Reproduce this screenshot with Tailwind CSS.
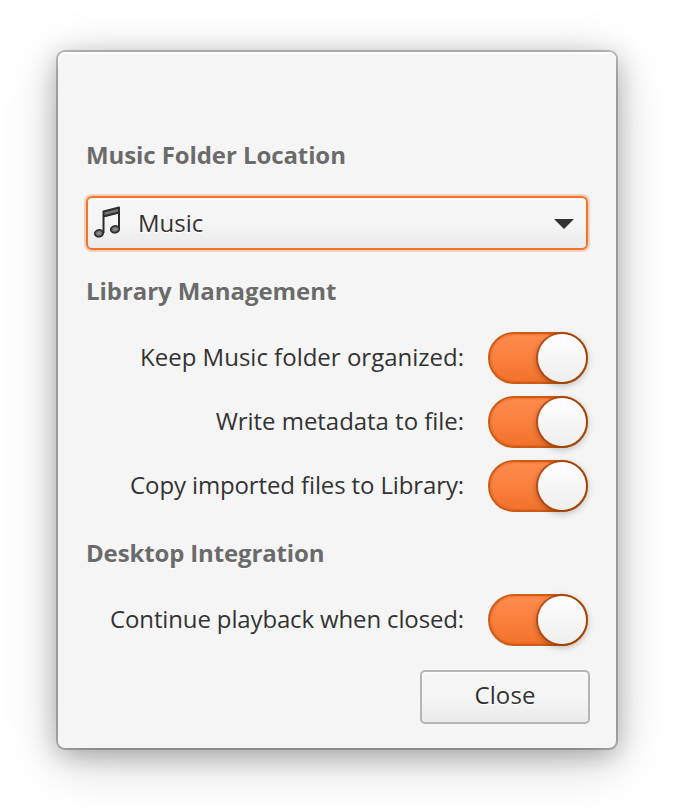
<!DOCTYPE html>
<html lang="en">
<head>
<meta charset="utf-8">
<title>Music Preferences</title>
<script src="https://cdn.jsdelivr.net/npm/@tailwindcss/browser@4"></script>
</head>
<body class="bg-white w-[674px] h-[812px] overflow-hidden pt-[52px] pl-[58px] font-['Open_Sans',sans-serif] text-[24px] leading-[34px] text-[#333]">
<main class="w-[558px] h-[696px] rounded-[7px] bg-[#f5f5f5] px-7 pt-[86px] flex flex-col shadow-[inset_0_2px_0_#fff,0_0_0_2px_rgba(0,0,0,0.23),0_6px_26px_rgba(0,0,0,0.28),0_12px_56px_rgba(0,0,0,0.2)]">
  <h2 class="h-[34px] font-bold text-[#6b6b6b] tracking-[-0.09px] [text-shadow:0_1px_0_#fff]">Music Folder Location</h2>
  <button class="mt-[24px] h-[54px] w-[502px] shrink-0 border-2 border-[#f37329] rounded-[6px] flex items-center pl-[5px] pr-[12px] text-left bg-linear-to-b from-[#f6f6f6] from-0% via-[#f5f5f5] via-50% to-[#eaeaea] shadow-[inset_0_2px_0_rgba(255,255,255,0.6),0_0_0_2px_rgba(243,115,41,0.28)]">
    <svg class="w-[30px] h-[36px] shrink-0" viewBox="0 0 30 36" fill="none">
      <defs><radialGradient id="note"><stop offset="0" stop-color="#999"/><stop offset="1" stop-color="#555"/></radialGradient></defs>
      <path d="M10.500 6.500 26 2.500V8L10.500 12Z" fill="#737373"/>
      <path d="M10.500 28V6.500L26 2.500V24M10.500 11.500 26 7.500" stroke="#2c2c2c" stroke-width="2" stroke-linejoin="round"/>
      <ellipse cx="6" cy="28.300" rx="4.300" ry="3.400" transform="rotate(-10 6 28.300)" fill="url(#note)" stroke="#2c2c2c" stroke-width="1.600"/>
      <ellipse cx="22" cy="24.300" rx="4.300" ry="3.400" transform="rotate(-10 22 24.300)" fill="url(#note)" stroke="#2c2c2c" stroke-width="1.600"/>
    </svg>
    <span class="ml-[15px] grow [text-shadow:0_1px_0_#fff]">Music</span>
    <svg class="w-[20px] h-[10px] mt-[2px]" viewBox="0 0 20 10"><path d="M0 0H20L10 10Z" fill="#333"/></svg>
  </button>
  <h2 class="mt-[24px] h-[34px] font-bold text-[#6b6b6b] tracking-[-0.06px] [text-shadow:0_1px_0_#fff]">Library Management</h2>
  <div class="mt-[24px] flex flex-col gap-3">
    <div class="h-[52px] flex items-center justify-end gap-6"><span class="pb-[2px]">Keep Music folder organized:</span>
      <span class="w-[100px] h-[52px] rounded-full border-2 border-[#cc5c18] bg-linear-to-b from-[#ff8c4f] to-[#f37329] flex justify-end shadow-[inset_0_0_2px_1px_rgba(204,80,10,0.35)]"><i class="block size-[48px] rounded-full bg-linear-to-b from-white to-[#eee] shadow-[0_0_0_2px_rgba(160,60,0,0.68),0_2px_6px_2px_rgba(0,0,0,0.22)]"></i></span></div>
    <div class="h-[52px] flex items-center justify-end gap-6"><span class="pb-[2px] tracking-[-0.04px]">Write metadata to file:</span>
      <span class="w-[100px] h-[52px] rounded-full border-2 border-[#cc5c18] bg-linear-to-b from-[#ff8c4f] to-[#f37329] flex justify-end shadow-[inset_0_0_2px_1px_rgba(204,80,10,0.35)]"><i class="block size-[48px] rounded-full bg-linear-to-b from-white to-[#eee] shadow-[0_0_0_2px_rgba(160,60,0,0.68),0_2px_6px_2px_rgba(0,0,0,0.22)]"></i></span></div>
    <div class="h-[52px] flex items-center justify-end gap-6"><span class="pb-[2px] tracking-[-0.125px]">Copy imported files to Library:</span>
      <span class="w-[100px] h-[52px] rounded-full border-2 border-[#cc5c18] bg-linear-to-b from-[#ff8c4f] to-[#f37329] flex justify-end shadow-[inset_0_0_2px_1px_rgba(204,80,10,0.35)]"><i class="block size-[48px] rounded-full bg-linear-to-b from-white to-[#eee] shadow-[0_0_0_2px_rgba(160,60,0,0.68),0_2px_6px_2px_rgba(0,0,0,0.22)]"></i></span></div>
  </div>
  <h2 class="mt-[24px] h-[34px] font-bold text-[#6b6b6b] tracking-[-0.15px] [text-shadow:0_1px_0_#fff]">Desktop Integration</h2>
  <div class="mt-[24px] h-[52px] flex items-center justify-end gap-6"><span class="pb-[2px] tracking-[-0.14px]">Continue playback when closed:</span>
    <span class="w-[100px] h-[52px] rounded-full border-2 border-[#cc5c18] bg-linear-to-b from-[#ff8c4f] to-[#f37329] flex justify-end shadow-[inset_0_0_2px_1px_rgba(204,80,10,0.35)]"><i class="block size-[48px] rounded-full bg-linear-to-b from-white to-[#eee] shadow-[0_0_0_2px_rgba(160,60,0,0.68),0_2px_6px_2px_rgba(0,0,0,0.22)]"></i></span></div>
  <button class="mt-[24px] -mr-[2px] self-end w-[170px] h-[54px] shrink-0 border-2 border-[#b5b5b5] rounded-[5px] pb-[4px] tracking-[0.1px] bg-linear-to-b from-[#f6f6f6] via-[#f5f5f5] to-[#eaeaea] shadow-[inset_0_2px_0_rgba(255,255,255,0.6)] [text-shadow:0_1px_0_#fff]">Close</button>
</main>
</body>
</html>
